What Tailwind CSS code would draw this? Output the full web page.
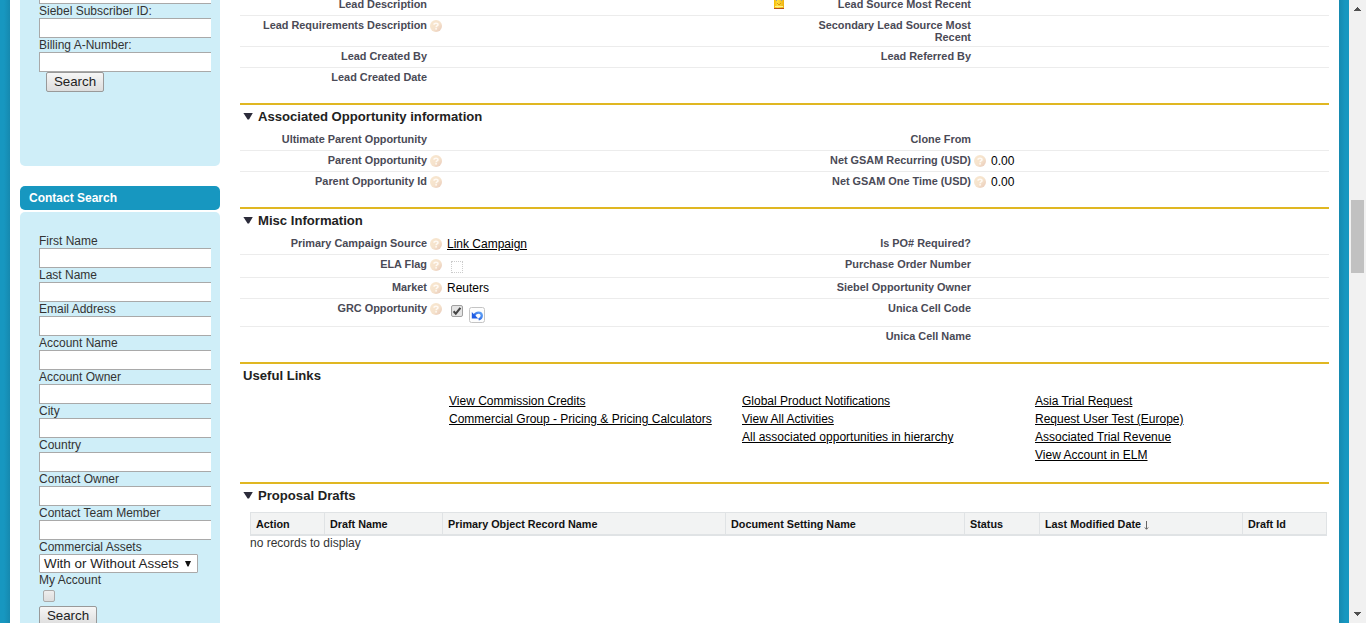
<!DOCTYPE html>
<html lang="en">
<head>
<meta charset="utf-8">
<title>Opportunity</title>
<script src="https://cdn.jsdelivr.net/npm/@tailwindcss/browser@4"></script>
</head>
<body class="w-[1366px] h-[623px] overflow-hidden bg-white text-[12px] leading-[14px] font-['Liberation_Sans',Arial,sans-serif] text-black">
<svg class="absolute size-0">
  <defs>
    <linearGradient id="hg" x1="0" y1="0" x2="1" y2="1"><stop offset="0" stop-color="#f9e8d0"/><stop offset=".55" stop-color="#f5e2cc"/><stop offset="1" stop-color="#e8c8b8"/></linearGradient>
    <linearGradient id="lg" x1="0" y1="0" x2="1" y2="0"><stop offset="0" stop-color="#f5b800"/><stop offset=".35" stop-color="#ffdf40"/><stop offset="1" stop-color="#eeb010"/></linearGradient>
    <linearGradient id="ug" x1="0" y1="1" x2="1" y2="0"><stop offset="0" stop-color="#1c55e0"/><stop offset="1" stop-color="#62a4f6"/></linearGradient>
  </defs>
  <symbol id="help" viewBox="0 0 12 12"><circle cx="6" cy="6" r="6" fill="url(#hg)"/><path d="M4 4.7C4 2.6 8 2.6 8 4.7C8 6 6.1 5.9 6.1 7.2" fill="none" stroke="#fffaf4" stroke-width="1.5"/><rect x="5.3" y="8.1" width="1.6" height="1.5" fill="#fffaf4"/></symbol>
  <symbol id="tri" viewBox="0 0 10 8"><path d="M.4 1H9.8L6 7.5H4.6Z" fill="#2b2b3a"/></symbol>
</svg>
<div class="flex h-full">
  <div class="w-[10px] shrink-0 bg-linear-to-r from-[#1797c0] from-40% to-[#1689af]"></div>
  <aside class="w-[230px] shrink-0 pl-[10px] text-[#333]">
    <div class="w-[200px] h-[166px] bg-[#cfeef8] rounded-b-[5px] pl-[19px] pr-[9px]">
      <div class="h-[4px] bg-white border-l border-b border-[#a9a9a9]"></div>
      <div class="h-[14px]">Siebel Subscriber ID:</div>
      <div class="h-[20px] bg-white border border-r-0 border-[#a9a9a9]"></div>
      <div class="h-[14px]">Billing A-Number:</div>
      <div class="h-[20px] bg-white border border-r-0 border-[#a9a9a9]"></div>
      <button class="block ml-[7px] w-[58px] h-[20px] border border-[#999] rounded-[2px] bg-linear-to-b from-[#f6f6f6] to-[#dddddd] text-[13.33px] leading-[18px] text-[#222]">Search</button>
    </div>
    <h3 class="mt-[20px] w-[200px] h-[24px] rounded-[5px] bg-[#1797c0] pl-[9px] text-white font-bold leading-[24px]">Contact Search</h3>
    <div class="mt-[2px] w-[200px] h-[430px] bg-[#cfeef8] rounded-t-[5px] pt-[22px] pl-[19px] pr-[9px]">
      <div class="h-[14px]">First Name</div><div class="h-[20px] bg-white border border-r-0 border-[#a9a9a9]"></div>
      <div class="h-[14px]">Last Name</div><div class="h-[20px] bg-white border border-r-0 border-[#a9a9a9]"></div>
      <div class="h-[14px]">Email Address</div><div class="h-[20px] bg-white border border-r-0 border-[#a9a9a9]"></div>
      <div class="h-[14px]">Account Name</div><div class="h-[20px] bg-white border border-r-0 border-[#a9a9a9]"></div>
      <div class="h-[14px]">Account Owner</div><div class="h-[20px] bg-white border border-r-0 border-[#a9a9a9]"></div>
      <div class="h-[14px]">City</div><div class="h-[20px] bg-white border border-r-0 border-[#a9a9a9]"></div>
      <div class="h-[14px]">Country</div><div class="h-[20px] bg-white border border-r-0 border-[#a9a9a9]"></div>
      <div class="h-[14px]">Contact Owner</div><div class="h-[20px] bg-white border border-r-0 border-[#a9a9a9]"></div>
      <div class="h-[14px]">Contact Team Member</div><div class="h-[20px] bg-white border border-r-0 border-[#a9a9a9]"></div>
      <div class="h-[14px]">Commercial Assets</div>
      <div class="flex items-center justify-between w-[159px] h-[19px] bg-white border border-[#a9a9a9] rounded-[1px] pl-[4px] pr-[6px] text-[13.4px] leading-[17px] text-[#222] whitespace-nowrap">With or Without Assets<svg class="w-[6px] h-[6px]" viewBox="0 0 6 6"><path d="M0 0H6L3.5 5.5H2.5Z" fill="#111"/></svg></div>
      <div class="h-[14px]">My Account</div>
      <div class="mt-[3px] ml-[4px] size-[12px] border border-[#aaa] rounded-[2px] bg-linear-to-b from-[#eee] to-[#ddd]"></div>
      <button class="block mt-[4px] w-[58px] h-[20px] border border-[#999] rounded-[2px] bg-linear-to-b from-[#f6f6f6] to-[#dddddd] text-[13.33px] leading-[18px] text-[#222]">Search</button>
    </div>
  </aside>

  <main class="w-[1089px] shrink-0">
    <section class="h-[103px] overflow-hidden text-[#4a4a56]">
      <div class="flex h-[16px] border-b border-[#ececec] text-[10.9px] leading-[12px] font-bold">
        <div class="w-[187px] -mt-[2px] text-right">Lead Description</div>
        <svg class="ml-[347px] w-[10px] h-[9px]" viewBox="0 0 10 9"><rect width="10" height="9" fill="url(#lg)"/><path d="M2 0h1v1H2zM7 0h1v1H7z" fill="#999"/><path d="M1 6.5H9" stroke="#fff08a"/><path d="M3 3h1v1H3zM6 3h1v1H6zM4 4h2v1H4z" fill="#d89a10"/><path d="M0 8.5H10" stroke="#b8501c"/></svg>
        <div class="w-[187px] -mt-[2px] text-right">Lead Source Most Recent</div>
      </div>
      <div class="flex h-[31px] border-b border-[#ececec] pt-[3px] text-[10.9px] leading-[12px] font-bold">
        <div class="w-[187px] text-right">Lead Requirements Description</div><svg class="ml-[3px] mt-[1px] size-[12px]"><use href="#help"/></svg>
        <div class="ml-[369px] w-[160px] text-right">Secondary Lead Source Most Recent</div>
      </div>
      <div class="flex h-[21px] border-b border-[#ececec] pt-[3px] text-[10.9px] leading-[12px] font-bold">
        <div class="w-[187px] text-right">Lead Created By</div><div class="w-[544px] text-right">Lead Referred By</div>
      </div>
      <div class="flex h-[21px] pt-[3px] text-[10.9px] leading-[12px] font-bold"><div class="w-[187px] text-right">Lead Created Date</div></div>
    </section>

    <section class="h-[104px] border-t-2 border-[#e0b722] text-[#4a4a56]">
      <h3 class="flex h-[25px] pt-[4px] pl-[3px] text-[13.12px] leading-[16px] font-bold text-[#222]"><svg class="mt-[3px] mr-[5px] w-[10px] h-[8px]"><use href="#tri"/></svg>Associated Opportunity information</h3>
      <div class="flex h-[21px] border-b border-[#ececec] pt-[3px] text-[10.9px] leading-[12px] font-bold">
        <div class="w-[187px] text-right">Ultimate Parent Opportunity</div><div class="w-[544px] text-right">Clone From</div>
      </div>
      <div class="flex h-[21px] border-b border-[#ececec] pt-[3px] text-[10.9px] leading-[12px] font-bold">
        <div class="w-[187px] text-right">Parent Opportunity</div><svg class="ml-[3px] mt-[1px] size-[12px]"><use href="#help"/></svg>
        <div class="w-[529px] text-right">Net GSAM Recurring (USD)</div><svg class="ml-[3px] mt-[1px] size-[12px]"><use href="#help"/></svg>
        <div class="ml-[5px] text-[12px] leading-[14px] font-normal text-black">0.00</div>
      </div>
      <div class="flex h-[21px] pt-[3px] text-[10.9px] leading-[12px] font-bold">
        <div class="w-[187px] text-right">Parent Opportunity Id</div><svg class="ml-[3px] mt-[1px] size-[12px]"><use href="#help"/></svg>
        <div class="w-[529px] text-right">Net GSAM One Time (USD)</div><svg class="ml-[3px] mt-[1px] size-[12px]"><use href="#help"/></svg>
        <div class="ml-[5px] text-[12px] leading-[14px] font-normal text-black">0.00</div>
      </div>
    </section>

    <section class="h-[155px] border-t-2 border-[#e0b722] text-[#4a4a56]">
      <h3 class="flex h-[25px] pt-[4px] pl-[3px] text-[13.12px] leading-[16px] font-bold text-[#222]"><svg class="mt-[3px] mr-[5px] w-[10px] h-[8px]"><use href="#tri"/></svg>Misc Information</h3>
      <div class="flex h-[21px] border-b border-[#ececec] pt-[3px] text-[10.9px] leading-[12px] font-bold">
        <div class="w-[187px] text-right">Primary Campaign Source</div><svg class="ml-[3px] mt-[1px] size-[12px]"><use href="#help"/></svg>
        <div class="ml-[5px] w-[120px] text-[12px] leading-[14px] font-normal text-black underline">Link Campaign</div>
        <div class="w-[404px] text-right">Is PO# Required?</div>
      </div>
      <div class="flex h-[23px] border-b border-[#ececec] pt-[3px] text-[10.9px] leading-[12px] font-bold">
        <div class="w-[187px] text-right">ELA Flag</div><svg class="ml-[3px] mt-[1px] size-[12px]"><use href="#help"/></svg>
        <div class="ml-[9px] mt-[3px] size-[12px] border border-dotted border-[#ccc]"></div>
        <div class="w-[508px] text-right">Purchase Order Number</div>
      </div>
      <div class="flex h-[21px] border-b border-[#ececec] pt-[3px] text-[10.9px] leading-[12px] font-bold">
        <div class="w-[187px] text-right">Market</div><svg class="ml-[3px] mt-[1px] size-[12px]"><use href="#help"/></svg>
        <div class="ml-[5px] w-[120px] text-[12px] leading-[14px] font-normal text-black">Reuters</div>
        <div class="w-[404px] text-right">Siebel Opportunity Owner</div>
      </div>
      <div class="flex h-[28px] border-b border-[#ececec] pt-[3px] text-[10.9px] leading-[12px] font-bold">
        <div class="w-[187px] text-right">GRC Opportunity</div><svg class="ml-[3px] mt-[1px] size-[12px]"><use href="#help"/></svg>
        <svg class="ml-[9px] mt-[3px] size-[12px]" viewBox="0 0 12 12"><rect x=".5" y=".5" width="11" height="11" rx="1.5" fill="#e4e4e4" stroke="#a0a0a0"/><path d="M2.6 6.2L4.8 8.6L9.4 2.8" fill="none" stroke="#444" stroke-width="2.1"/></svg>
        <svg class="ml-[6px] mt-[5px] size-[16px]" viewBox="0 0 16 16"><rect x=".5" y=".5" width="15" height="15" rx="2" fill="#fdfdfd" stroke="#c4c4c4"/><path d="M5.2 8.4C7 4.6 12.6 4.6 12.8 8.4C12.8 10.4 11.6 11.8 9.6 12.3" fill="none" stroke="url(#ug)" stroke-width="2.3"/><path d="M2.8 5V11.6H9.2Z" fill="#1f5ce4"/></svg>
        <div class="w-[486px] text-right">Unica Cell Code</div>
      </div>
      <div class="pt-[3px] w-[731px] text-right text-[10.9px] leading-[12px] font-bold">Unica Cell Name</div>
    </section>

    <section class="h-[120px] border-t-2 border-[#e0b722]">
      <h3 class="h-[28px] pt-[4px] pl-[3px] text-[13.12px] leading-[16px] font-bold text-[#222]">Useful Links</h3>
      <div class="grid grid-cols-[293px_293px_1fr] pl-[209px] leading-[18px] underline">
        <div><div>View Commission Credits</div><div>Commercial Group - Pricing &amp; Pricing Calculators</div></div>
        <div><div>Global Product Notifications</div><div>View All Activities</div><div>All associated opportunities in hierarchy</div></div>
        <div><div>Asia Trial Request</div><div>Request User Test (Europe)</div><div>Associated Trial Revenue</div><div>View Account in ELM</div></div>
      </div>
    </section>

    <section class="border-t-2 border-[#e0b722]">
      <h3 class="flex h-[28px] pt-[4px] pl-[3px] text-[13.12px] leading-[16px] font-bold text-[#222]"><svg class="mt-[3px] mr-[5px] w-[10px] h-[8px]"><use href="#tri"/></svg>Proposal Drafts</h3>
      <div class="ml-[10px] w-[1077px] h-[24px] grid grid-cols-[74px_118px_283px_239px_75px_203px_85px] bg-[#f2f3f3] border-t border-b-2 border-r border-[#e0e3e5] text-[10.8px] leading-[22px] font-bold text-[#111]">
        <div class="border-l border-[#e0e3e5] pl-[5px]">Action</div>
        <div class="border-l border-[#e0e3e5] pl-[5px]">Draft Name</div>
        <div class="border-l border-[#e0e3e5] pl-[5px]">Primary Object Record Name</div>
        <div class="border-l border-[#e0e3e5] pl-[5px]">Document Setting Name</div>
        <div class="border-l border-[#e0e3e5] pl-[5px]">Status</div>
        <div class="flex border-l border-[#e0e3e5] pl-[5px]">Last Modified Date<svg class="ml-[3px] mt-[8px] w-[5px] h-[9px]" viewBox="0 0 5 9"><path d="M2.5 0V8M.8 6.5L2.5 8.3L4.2 6.5" fill="none" stroke="#666"/></svg></div>
        <div class="border-l border-[#e0e3e5] pl-[5px]">Draft Id</div>
      </div>
      <div class="ml-[10px] text-[#333]">no records to display</div>
    </section>
  </main>
  <div class="w-[10px] shrink-0"></div>
  <div class="w-[10px] shrink-0 bg-linear-to-r from-[#1689af] to-[#1797c0] to-60%"></div>
  <div class="w-[17px] shrink-0 bg-[#f1f1f1] flex flex-col items-center">
    <svg class="mt-[7px] w-[7px] h-[4px]" viewBox="0 0 7 4"><path d="M3 0h1v1h1v1h1v1h1v1H0V3h1V2h1V1h1z" fill="#505050"/></svg>
    <div class="mt-[189px] w-[13px] h-[73px] bg-[#c1c1c1]"></div>
    <svg class="mt-[339px] w-[7px] h-[4px]" viewBox="0 0 7 4"><path d="M0 0h7v1H6v1H5v1H4v1H3V3H2V2H1V1H0z" fill="#505050"/></svg>
  </div>
</div>
</body>
</html>
